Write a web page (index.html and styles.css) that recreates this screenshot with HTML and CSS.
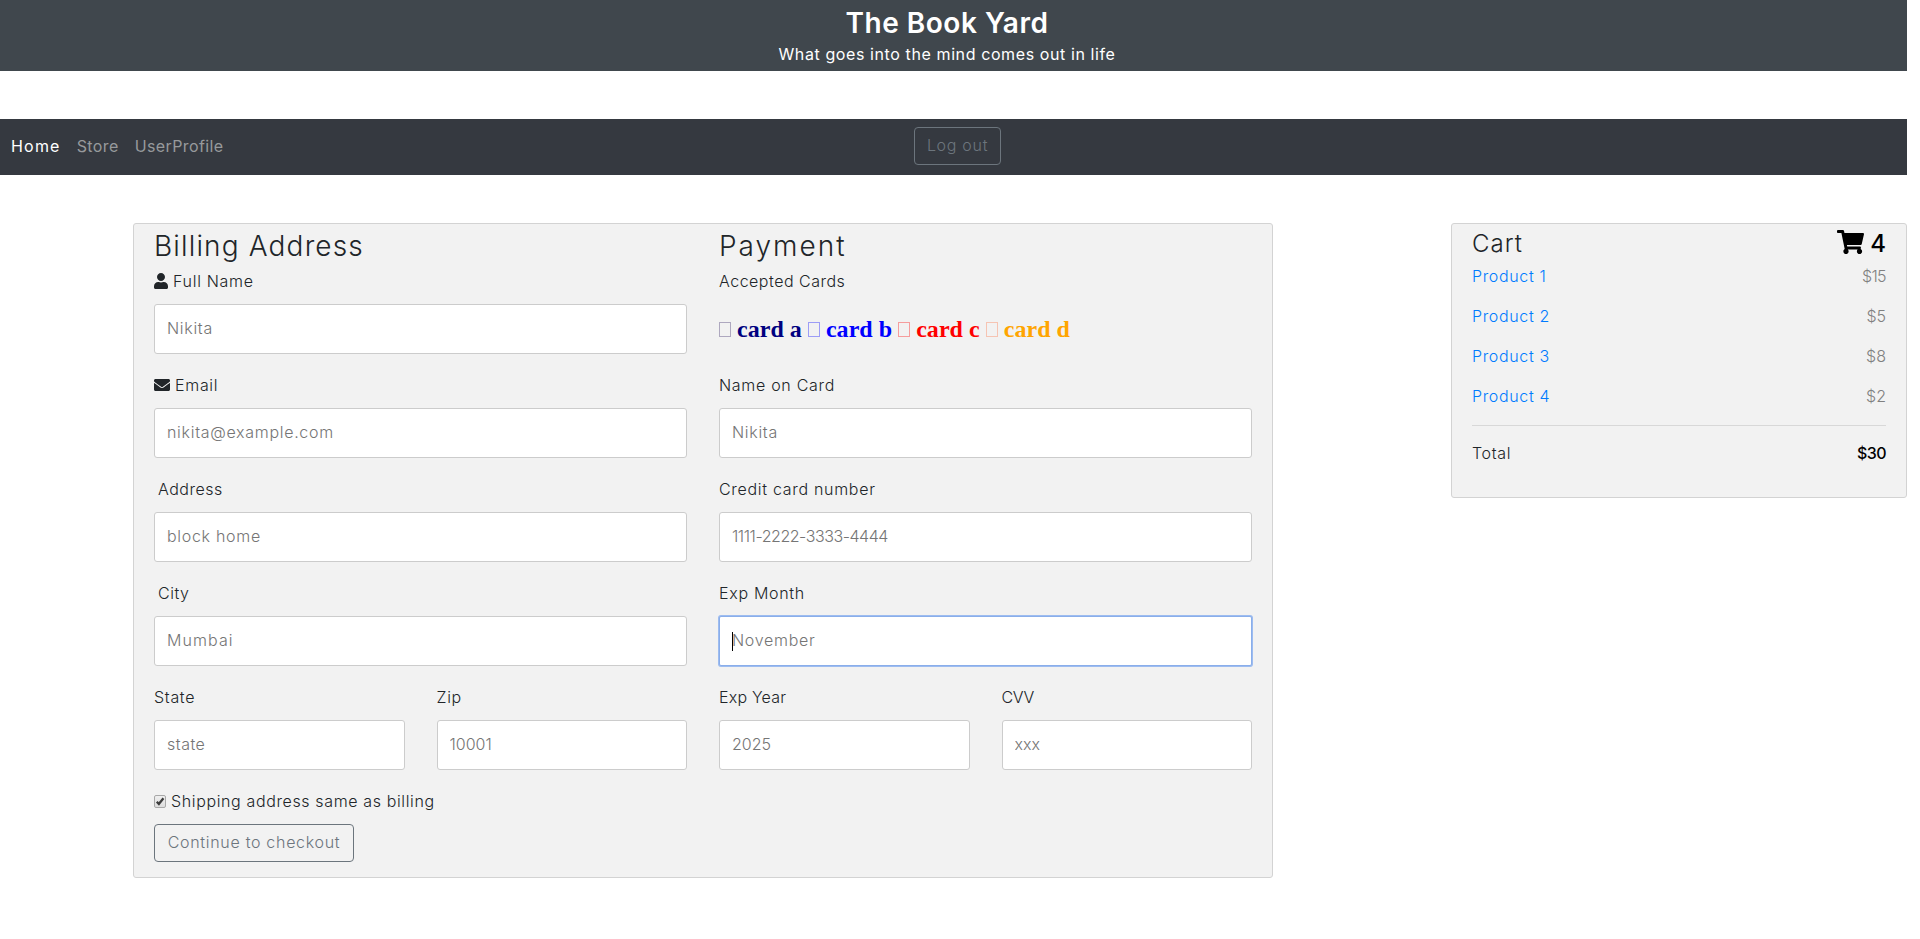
FILE: index.html
```html
<!DOCTYPE html>
<html lang="en">
<head>
<meta charset="utf-8">
<title>The Book Yard</title>
<link rel="stylesheet" href="styles.css">
</head>
<body>
<header class="banner">
  <h3 class="banner-title">The Book Yard</h3>
  <p class="banner-sub">What goes into the mind comes out in life</p>
</header>
<nav class="navbar">
  <div class="nav-links">
    <a class="nav-link active">Home</a>
    <a class="nav-link store">Store</a>
    <a class="nav-link profile">UserProfile</a>
  </div>
  <button class="btn logout">Log out</button>
</nav>
<main class="content">
  <form class="panel checkout">
    <div class="columns">
      <section class="column">
        <h3 class="heading billing">Billing Address</h3>
        <label class="label"><svg class="icon user" viewBox="0 0 448 512"><path d="M224 256c70.7 0 128-57.3 128-128S294.7 0 224 0 96 57.3 96 128s57.3 128 128 128zm89.6 32h-16.7c-22.2 10.2-46.9 16-72.9 16s-50.6-5.8-72.9-16h-16.7C60.2 288 0 348.2 0 422.4V464c0 26.5 21.5 48 48 48h352c26.5 0 48-21.5 48-48v-41.6c0-74.2-60.2-134.4-134.4-134.4z"/></svg><span>Full Name</span></label>
        <input class="field" placeholder="Nikita">
        <label class="label"><svg class="icon mail" viewBox="0 0 512 512"><path d="M502.3 190.8c3.9-3.1 9.7-.2 9.7 4.7V400c0 26.5-21.5 48-48 48H48c-26.5 0-48-21.5-48-48V195.6c0-5 5.7-7.8 9.7-4.7 22.4 17.4 52.1 39.5 154.1 113.6 21.1 15.4 56.7 47.8 92.2 47.6 35.7.3 72-32.8 92.3-47.6 102-74.1 131.6-96.3 154-113.7zM256 320c23.2.4 56.6-29.2 73.4-41.4 132.7-96.3 142.8-104.7 173.4-128.7 5.8-4.5 9.2-11.5 9.2-18.9v-19c0-26.5-21.5-48-48-48H48c-26.5 0-48 21.5-48 48v19c0 7.4 3.4 14.3 9.2 18.9 30.6 23.9 40.7 32.4 173.4 128.7 16.8 12.2 50.2 41.8 73.4 41.4z"/></svg><span>Email</span></label>
        <input class="field" placeholder="nikita@example.com">
        <label class="label indent snug">Address</label>
        <input class="field" placeholder="block home">
        <label class="label indent snug">City</label>
        <input class="field wide" placeholder="Mumbai">
        <div class="pair">
          <div><label class="label">State</label><input class="field snug" placeholder="state"></div>
          <div><label class="label">Zip</label><input class="field digits" placeholder="10001"></div>
        </div>
      </section>
      <section class="column">
        <h3 class="heading payment">Payment</h3>
        <label class="label snug">Accepted Cards</label>
        <div class="cards">
          <i class="tofu navy"></i> <b class="navy">card a</b>
          <i class="tofu blue"></i> <b class="blue">card b</b>
          <i class="tofu red"></i> <b class="red">card c</b>
          <i class="tofu orange"></i> <b class="orange">card d</b>
        </div>
        <label class="label">Name on Card</label>
        <input class="field" placeholder="Nikita">
        <label class="label">Credit card number</label>
        <input class="field card-number" placeholder="1111-2222-3333-4444">
        <label class="label">Exp Month</label>
        <div class="focus-wrap"><input class="field focused" placeholder="November"><span class="caret"></span></div>
        <div class="pair">
          <div><label class="label year">Exp Year</label><input class="field digits" placeholder="2025"></div>
          <div><label class="label cvv">CVV</label><input class="field digits" placeholder="xxx"></div>
        </div>
      </section>
    </div>
    <label class="label same"><svg class="check" viewBox="0 0 12 13"><defs><linearGradient id="g" x2="0" y2="1"><stop offset="0" stop-color="#f0f0f0"/><stop offset="1" stop-color="#dcdcdc"/></linearGradient></defs><rect x=".5" y=".5" width="11" height="12" rx="1.5" fill="url(#g)" stroke="#a8a8a8"/><path d="M2.8 6.7 4.9 9 9.4 3.2" fill="none" stroke="#3c3c3c" stroke-width="2.3"/></svg><span>Shipping address same as billing</span></label>
    <button class="btn continue">Continue to checkout</button>
  </form>
  <aside class="panel cart">
    <h4 class="cart-head"><span>Cart</span><span class="count"><svg class="icon trolley" viewBox="0 0 576 512"><path d="M528.12 301.319l47.273-208C578.806 78.301 567.391 64 551.99 64H159.208l-9.166-44.81C147.758 8.021 137.93 0 126.529 0H24C10.745 0 0 10.745 0 24v16c0 13.255 10.745 24 24 24h69.883l70.248 343.435C147.325 417.1 136 435.222 136 456c0 30.928 25.072 56 56 56s56-25.072 56-56c0-15.674-6.447-29.835-16.824-40h209.647C430.447 426.165 424 440.326 424 456c0 30.928 25.072 56 56 56s56-25.072 56-56c0-22.172-12.888-41.332-31.579-50.405l5.517-24.276c3.413-15.018-8.002-29.319-23.403-29.319H218.117l-6.545-32h293.145c11.206 0 20.92-7.754 23.403-18.681z"/></svg>4</span></h4>
    <p class="item"><a>Product 1</a><span class="price narrow">$15</span></p>
    <p class="item"><a>Product 2</a><span class="price">$5</span></p>
    <p class="item"><a>Product 3</a><span class="price">$8</span></p>
    <p class="item"><a>Product 4</a><span class="price">$2</span></p>
    <hr class="rule">
    <p class="item"><span>Total</span><b class="sum narrow">$30</b></p>
  </aside>
</main>
</body>
</html>
```
FILE: styles.css
```css
* { box-sizing: border-box; }
body {
  margin: 0;
  width: 1907px;
  background: #fff;
  color: #212529;
  font: 300 16px/24px Inter, "Open Sans", sans-serif;
  letter-spacing: 0.7px;
}
h3, h4, p { margin: 0; }

.banner { height: 71px; background: #40474d; color: #fff; text-align: center; padding: 6px 13px 0 0; }
.banner-title { font-size: 28px; line-height: 34px; font-weight: 600; letter-spacing: 0.5px; }
.banner-sub { font-weight: 400; line-height: 24px; padding-top: 2px; letter-spacing: 0.6px; }

.navbar { height: 56px; margin-top: 48px; background: #353940; display: flex; align-items: flex-start; padding: 8px 12px 8px 11px; }
.nav-links { width: 903px; display: flex; gap: 16px; padding-top: 7px; font-weight: 400; letter-spacing: 0.4px; }
.nav-link { color: #97999c; }
.nav-link.active { color: #fff; letter-spacing: 1.2px; }
.btn { height: 38px; border: 1px solid #6c757d; border-radius: 4px; background: transparent; color: #6c757d; font: inherit; letter-spacing: inherit; padding: 0 0 2px; text-align: center; white-space: nowrap; }
.logout { width: 87px; }

.content { display: flex; align-items: flex-start; justify-content: space-between; margin-top: 48px; padding-left: 133px; }
.panel { background: #f2f2f2; border: 1px solid #d3d3d3; border-radius: 3px; padding: 5px 20px 15px; }
.checkout { width: 1140px; height: 655px; }
.columns { display: grid; grid-template-columns: 1fr 1fr; gap: 32px; }
.heading { font-size: 28px; line-height: 33px; margin-bottom: 8px; font-weight: 300; padding-top: 1px; height: 33px; }
.billing { letter-spacing: 1.15px; }
.payment { letter-spacing: 2px; }
.label { display: flex; align-items: center; height: 24px; margin-bottom: 10px; white-space: pre; padding-bottom: 2px; }
.indent { padding-left: 4px; }
.field { display: block; width: 100%; height: 50px; margin: 0 0 20px; padding: 11px 12px 13px; border: 1px solid #ccc; border-radius: 3px; background: #fff; font: inherit; letter-spacing: inherit; outline: 0; }
.field::placeholder { color: #757575; opacity: 1; }
.snug { letter-spacing: 0.5px; }
.wide { letter-spacing: 1.1px; }
.digits { letter-spacing: 0; }
.card-number { letter-spacing: -0.45px; }
.year { letter-spacing: 0.2px; }
.cvv { letter-spacing: -0.3px; }
.pair { display: grid; grid-template-columns: 1fr 1fr; gap: 32px; }
.focus-wrap { position: relative; }
.focused { border-color: #8aaeea; box-shadow: 0 0 0 1px #9dbcf0; border-radius: 2px; }
.caret { position: absolute; left: 13px; top: 16px; width: 1px; height: 19px; background: #000; }

.icon { fill: currentColor; flex: none; }
.user { width: 14px; height: 16px; margin-right: 5px; }
.mail { width: 16px; height: 16px; margin-right: 5px; }
.cards { height: 50px; margin-bottom: 20px; padding: 7px 0; font: 24px/36px "Liberation Serif", serif; letter-spacing: 0.03px; white-space: nowrap; }
.tofu { display: inline-block; width: 12px; height: 15px; border: 1px solid; opacity: .35; }
.navy { color: navy; }
.blue { color: blue; }
.red { color: red; }
.orange { color: orange; }
.tofu.navy { color: #302060; }
.tofu.orange { color: #ff7040; }
.same { letter-spacing: 0.63px; }
.check { width: 12px; height: 13px; margin-right: 5px; }
.continue { display: block; width: 200px; }

.cart { width: 456px; height: 275px; }
.cart-head { display: flex; justify-content: space-between; height: 28px; margin-bottom: 7px; font-size: 24px; line-height: 29px; font-weight: 300; letter-spacing: 1px; }
.count { display: flex; align-items: flex-start; color: #000; font-weight: 500; letter-spacing: 0; }
.trolley { width: 27px; height: 24px; margin: 1px 6px 0 0; }
.item { display: flex; justify-content: space-between; height: 24px; margin-bottom: 16px; letter-spacing: 0.65px; }
.item a { color: #007bff; }
.price { color: #808080; letter-spacing: 0; }
.narrow { letter-spacing: -0.6px; }
.rule { border: 0; border-top: 1px solid #d8d8d8; margin: 17px 0 15px; }
.sum { color: #000; font-weight: 500; }
```
